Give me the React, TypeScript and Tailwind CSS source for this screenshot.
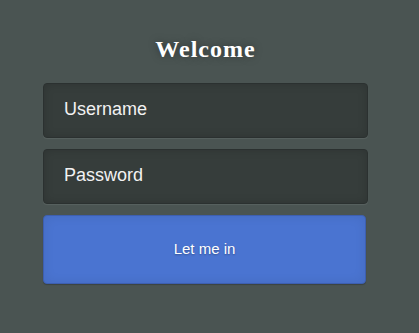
import React from 'react';

const App = () => {
  return (
    <div className="min-h-[333px] w-full bg-[#4a5452] flex flex-col items-center pt-[33px] pr-[8px]">
      <h1 className="text-[24px] leading-[32px] tracking-[1px] font-bold text-white [font-family:'Liberation_Serif',serif] [text-shadow:0_0_8px_rgba(0,0,0,0.35)]">
        Welcome
      </h1>
      <form className="mt-[18px] flex flex-col gap-[11px] w-[325px]" onSubmit={(e) => e.preventDefault()}>
        <input
          type="text"
          placeholder="Username"
          className="h-[55px] w-[325px] rounded-[4px] border border-[#2b3130] bg-[#363d3b] px-[20px] pb-[3px] text-[18px] text-white placeholder:text-[#f2f2f2] outline-none shadow-[inset_0_0_10px_rgba(0,0,0,0.15),0_1px_1px_rgba(255,255,255,0.08)] [font-family:'Liberation_Sans',Arial,sans-serif]"
        />
        <input
          type="password"
          placeholder="Password"
          className="h-[55px] w-[325px] rounded-[4px] border border-[#2b3130] bg-[#363d3b] px-[20px] pb-[3px] text-[18px] text-white placeholder:text-[#f2f2f2] outline-none shadow-[inset_0_0_10px_rgba(0,0,0,0.15),0_1px_1px_rgba(255,255,255,0.08)] [font-family:'Liberation_Sans',Arial,sans-serif]"
        />
        <button
          type="submit"
          className="h-[69px] w-[323px] rounded-[4px] border border-[#3d5fb0] bg-[#4a74d1] text-[15px] text-white [text-shadow:0_1px_2px_rgba(0,0,0,0.3)] shadow-[inset_0_0_12px_rgba(0,0,0,0.08),0_1px_1px_rgba(0,0,0,0.2)] [font-family:'Liberation_Sans',Arial,sans-serif]"
        >
          Let me in
        </button>
      </form>
    </div>
  );
};

export default App;
